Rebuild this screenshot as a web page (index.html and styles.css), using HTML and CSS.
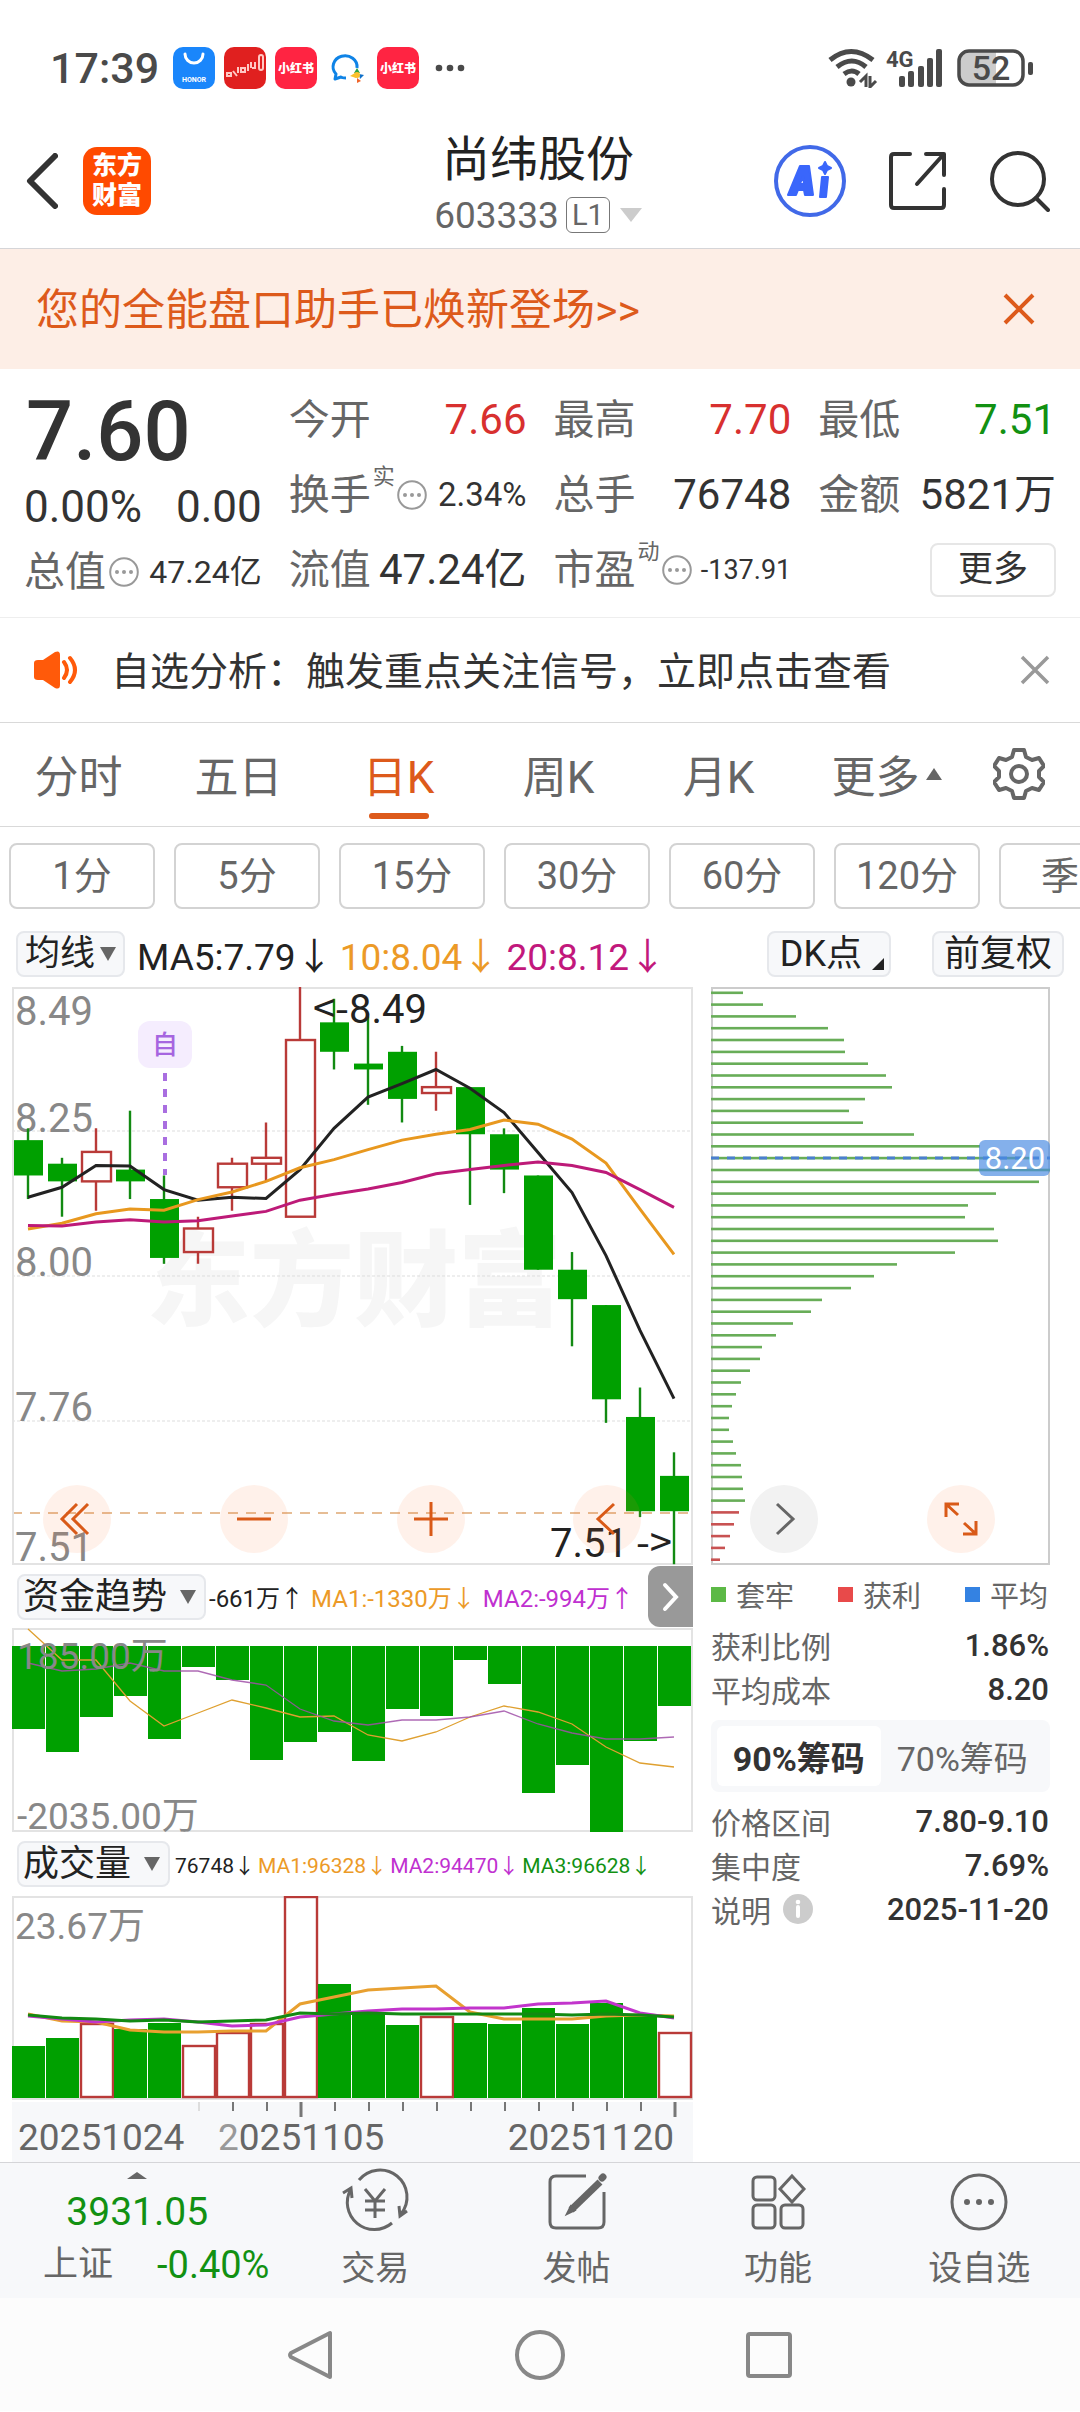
FILE: index.html
```html
<!DOCTYPE html>
<html lang="zh-CN">
<head>
<meta charset="utf-8">
<meta name="viewport" content="width=device-width, initial-scale=1">
<title>尚纬股份 603333</title>
<link rel="stylesheet" href="styles.css">
</head>
<body>
<div class="status">
  <span class="clock">17:39</span>
  <svg class="app" viewBox="0 0 42 42"><rect width="42" height="42" rx="10" fill="#1a86fb"/><path d="M12 7a9 9 0 0 0 18 0" fill="none" stroke="#fff" stroke-width="3" stroke-linecap="round"/><text x="21" y="35" font-size="7" font-weight="700" fill="#fff" text-anchor="middle">HONOR</text></svg>
  <svg class="app" viewBox="0 0 42 42"><rect width="42" height="42" rx="10" fill="#e0201f"/><g fill="none" stroke="#ffc9c4" stroke-width="2"><path d="M3 26h4v3H3zM9 24l4 5M14 20v6M17 21h4v4h-4zM24 17v7M27 15v6M31 15v6h-3"/><rect x="35" y="8" width="4" height="15" rx="2"/></g></svg>
  <svg class="app" viewBox="0 0 42 42"><rect width="42" height="42" rx="10" fill="#ff2442"/><text x="21" y="26" font-size="12" font-weight="900" fill="#fff" text-anchor="middle">小红书</text></svg>
  <svg class="app" viewBox="0 0 42 42"><path d="M20 31c-2 0-4 0-5-1l-6 2 1-5a12 11 0 1 1 21-6" fill="none" stroke="#0f83e6" stroke-width="3" stroke-linejoin="round"/><path d="M28 26l3-5 3 5z" fill="#2ba245"/><path d="M33 27l5 1-4 4z" fill="#0f70c9"/><path d="M31 31l4 3-4 2z" fill="#f0662b"/><path d="M24 29l5-3 1 5z" fill="#fbc02d"/><circle cx="31" cy="28" r="3" fill="#fbc02d"/></svg>
  <svg class="app" viewBox="0 0 42 42"><rect width="42" height="42" rx="10" fill="#ff2442"/><text x="21" y="26" font-size="12" font-weight="900" fill="#fff" text-anchor="middle">小红书</text></svg>
  <svg class="dots" viewBox="0 0 30 8" fill="#4a4a4a"><circle cx="4" cy="4" r="3.3"/><circle cx="15" cy="4" r="3.3"/><circle cx="26" cy="4" r="3.3"/></svg>
  <svg class="signals" viewBox="0 0 206 40">
    <g fill="none" stroke="#4a4a4a" stroke-width="5"><path d="M2 12q21-17 43 0"/><path d="M9 19q15-12 29 0"/><path d="M16 26q8-6 15 0"/></g>
    <circle cx="23" cy="34" r="4.500" fill="#4a4a4a"/>
    <path d="M38 39V28l-6 6M42 28v11l6-6" fill="none" stroke="#4a4a4a" stroke-width="3"/>
    <text class="net" x="58" y="19">4G</text>
    <g fill="#4a4a4a"><rect x="71" y="28" width="6" height="11" rx="2"/><rect x="80" y="23" width="6" height="16" rx="2"/><rect x="90" y="18" width="6" height="21" rx="2"/><rect x="99" y="10" width="6" height="29" rx="2"/><rect x="108" y="1" width="6" height="38" rx="2"/></g>
    <path d="M140 4h28v32h-28a8 8 0 0 1-8-8V12a8 8 0 0 1 8-8z" fill="#ccc"/>
    <rect x="131" y="3" width="64" height="34" rx="10" fill="none" stroke="#4a4a4a" stroke-width="3.500"/>
    <rect x="200" y="14" width="5" height="13" rx="2" fill="#4a4a4a"/>
    <text class="charge" x="163" y="32">52</text>
  </svg>
</div>

<header class="top">
  <div class="top-left">
    <button class="plain" aria-label="返回"><svg width="32" height="56" viewBox="0 0 32 56"><path d="M29 3L4 28l25 25" fill="none" stroke="#333" stroke-width="6" stroke-linejoin="round" stroke-linecap="round"/></svg></button>
    <a class="brand" href="#">东方<br>财富</a>
  </div>
  <div class="stock">
    <h1>尚纬股份</h1>
    <div class="code"><span>603333</span><span class="level">L1</span><i class="tri-down pale"></i></div>
  </div>
  <div class="top-right">
    <button class="plain" aria-label="AI"><svg width="72" height="72" viewBox="0 0 72 72"><circle cx="36" cy="36" r="34" fill="none" stroke="#4169e8" stroke-width="4"/><g fill="#3a66fb" stroke="#3a66fb" stroke-width="2" stroke-linejoin="round"><path fill-rule="evenodd" d="M14 50l12-29h9l4 29h-8l-1-5h-6l-2 5zM26 39h4l-1-8z"/><path d="M48 32h6l-2 20h-6z"/><path d="M51 17l2 4 4 2-4 2-2 4-2-4-4-2 4-2z"/></g></svg></button>
    <button class="plain" aria-label="分享"><svg width="58" height="60" viewBox="0 0 58 60"><g fill="none" stroke="#333" stroke-width="4" stroke-linecap="round" stroke-linejoin="round"><path d="M21 3H5q-3 0-3 3v48q0 3 3 3h47q3 0 3-3V38"/><path d="M37 3h18v21M54 4L28 33"/></g></svg></button>
    <button class="plain" aria-label="搜索"><svg width="60" height="62" viewBox="0 0 60 62"><g fill="none" stroke="#333" stroke-width="4" stroke-linecap="round"><circle cx="28" cy="29" r="26"/><path d="M46 48l12 12"/></g></svg></button>
  </div>
</header>

<div class="promo">
  <a href="#">您的全能盘口助手已焕新登场&gt;&gt;</a>
  <button class="plain" aria-label="关闭"><svg width="32" height="32" viewBox="0 0 32 32"><path d="M2 2l28 28M30 2L2 30" stroke="#dd5a1b" stroke-width="4"/></svg></button>
</div>

<section class="quote">
  <div class="price-col">
    <strong class="price">7.60</strong>
    <div class="cell big"><span>0.00%</span><span>0.00</span></div>
    <div class="cell"><span class="k">总值</span><svg class="more-dot" viewBox="0 0 30 30"><use href="#more"/></svg><span class="v mid">47.24亿</span></div>
  </div>
  <div class="cell"><span class="k">今开</span><span class="v red">7.66</span></div>
  <div class="cell"><span class="k">最高</span><span class="v red">7.70</span></div>
  <div class="cell"><span class="k">最低</span><span class="v green">7.51</span></div>
  <div class="cell"><span class="k">换手</span><sup>实</sup><svg class="more-dot" viewBox="0 0 30 30"><g id="more"><circle cx="15" cy="15" r="13.800" fill="none" stroke="#999" stroke-width="2"/><g fill="#999"><circle cx="8" cy="15" r="2"/><circle cx="15" cy="15" r="2"/><circle cx="22" cy="15" r="2"/></g></g></svg><span class="v mid">2.34%</span></div>
  <div class="cell"><span class="k">总手</span><span class="v">76748</span></div>
  <div class="cell"><span class="k">金额</span><span class="v">5821万</span></div>
  <div class="cell"><span class="k">流值</span><span class="v">47.24亿</span></div>
  <div class="cell"><span class="k">市盈</span><sup>动</sup><svg class="more-dot" viewBox="0 0 30 30"><use href="#more"/></svg><span class="v small">-137.91</span></div>
  <div class="cell"><button class="more">更多</button></div>
</section>

<div class="notice">
  <svg width="46" height="38" viewBox="0 0 46 38"><path d="M1 12q0-3 4-3h5L22 1q5-2 5 3v30q0 5-5 3l-12-8H5q-4 0-4-3z" fill="#ff5a0a"/><path d="M31 11q6 8 0 16M37 7q10 12 0 24" fill="none" stroke="#ff5a0a" stroke-width="4" stroke-linecap="round"/></svg>
  <a href="#">自选分析：触发重点关注信号，立即点击查看</a>
  <button class="plain" aria-label="关闭"><svg width="30" height="30" viewBox="0 0 30 30"><path d="M2 2l26 26M28 2L2 28" stroke="#999" stroke-width="3.500"/></svg></button>
</div>

<nav class="tabs">
  <button>分时</button><button>五日</button><button class="on">日K</button><button>周K</button><button>月K</button><button class="menu">更多<i class="tri-up"></i></button>
  <button aria-label="设置"><svg width="52" height="54" viewBox="0 0 52 54"><path d="M21 3h10l2 7 6 3 7-2 5 8-5 5v6l5 5-5 8-7-2-6 3-2 7H21l-2-7-6-3-7 2-5-8 5-5v-6l-5-5 5-8 7 2 6-3z" fill="none" stroke="#666" stroke-width="4" stroke-linejoin="round"/><circle cx="26" cy="27" r="8" fill="none" stroke="#666" stroke-width="4"/></svg></button>
</nav>

<div class="periods">
  <button>1分</button><button>5分</button><button>15分</button><button>30分</button><button>60分</button><button>120分</button><button>季K</button>
</div>

<div class="ma-bar">
  <label class="pick tight"><select aria-label="主图指标"><option>均线</option></select><i class="tri-down"></i></label>
  <span class="dark">MA5:7.79↓</span><span class="orange">10:8.04↓</span><span class="pink">20:8.12↓</span>
  <button class="pick dk">DK点<i class="corner"></i></button>
  <button class="pick">前复权</button>
</div>

<main class="charts">
  <section class="left">
    <svg id="kline" viewBox="0 0 681 578">
      <text class="watermark" x="134" y="331">东方财富</text>
      <g class="grid"><path d="M0 144h681M0 289h681M0 434h681"/></g>
      <path d="M0 526h681" stroke="#e6bd95" stroke-width="2" stroke-dasharray="10 8"/>
      <rect x="1" y="1" width="679" height="576" fill="none" stroke="#e3e3e3" stroke-width="2"/>
      <g class="axis"><text x="3" y="38">8.49</text><text x="3" y="145">8.25</text><text x="3" y="289">8.00</text><text x="3" y="434">7.76</text><text x="3" y="574">7.51</text></g>
      <g id="candles"></g>
      <rect x="126" y="34" width="54" height="47" rx="12" fill="#f5edfe"/>
      <text x="153" y="67" font-size="26" font-weight="500" fill="#a665e0" text-anchor="middle">自</text>
      <path d="M153 86v102" stroke="#a96ee0" stroke-width="4" stroke-dasharray="8 8"/>
      <g class="mark"><text class="arrow" x="337" y="36" text-anchor="end">&lt;-</text><text x="337" y="36">8.49</text><text x="538" y="570">7.51</text><text class="arrow" x="660" y="570" text-anchor="end">-&gt;</text></g>
    </svg>

    <div class="legend">
      <label class="pick"><select aria-label="副图指标一"><option>资金趋势</option></select><i class="tri-down"></i></label>
      <span class="dark">-661万↑</span><span class="orange">MA1:-1330万↓</span><span class="violet">MA2:-994万↑</span>
      <button class="next" aria-label="下一项"><svg width="18" height="30" viewBox="0 0 18 30"><path d="M3 3l11 12L3 27" fill="none" stroke="#fff" stroke-width="4" stroke-linecap="round"/></svg></button>
    </div>
    <svg id="fund" viewBox="0 0 681 204">
      <rect x="1" y="1" width="679" height="202" fill="none" stroke="#e3e3e3" stroke-width="2"/>
      <g id="fund-bars"></g>
      <g class="axis sub"><text x="5" y="41">185.00万</text><text x="5" y="201">-2035.00万</text></g>
    </svg>

    <div class="legend dense">
      <label class="pick"><select aria-label="副图指标二"><option>成交量</option></select><i class="tri-down"></i></label>
      <span class="dark">76748↓</span><span class="orange">MA1:96328↓</span><span class="violet">MA2:94470↓</span><span class="green">MA3:96628↓</span>
    </div>
    <svg id="volume" viewBox="0 0 681 204">
      <rect x="1" y="1" width="679" height="202" fill="none" stroke="#e3e3e3" stroke-width="2"/>
      <g class="axis sub"><text x="3" y="43">23.67万</text></g>
      <g id="volume-bars"></g>
    </svg>
    <svg class="dates" viewBox="0 0 681 60">
      <g id="ticks"></g>
      <text x="6" y="48">20251024</text><text x="206" y="48"><tspan fill="#999">2</tspan>0251105</text><text x="662" y="48" text-anchor="end">20251120</text>
    </svg>
  </section>

  <section class="right">
    <svg id="chips" viewBox="0 0 339 578">
      <rect x="1" y="1" width="337" height="576" fill="none" stroke="#ccc" stroke-width="2"/>
      <g id="chip-lines"></g>
      <path d="M0 171h339" stroke="#4a7fd0" stroke-width="3" stroke-dasharray="8 8"/>
      <rect x="268" y="153" width="71" height="36" rx="6" fill="#4a8ae2" fill-opacity=".68"/>
      <text x="304" y="182" font-size="31" fill="#fff" text-anchor="middle">8.20</text>
    </svg>
    <ul class="keys"><li class="k-green">套牢</li><li class="k-red">获利</li><li class="k-blue">平均</li></ul>
    <dl><dt>获利比例</dt><dd>1.86%</dd><dt>平均成本</dt><dd>8.20</dd></dl>
    <div class="segment"><button class="on">90%筹码</button><button>70%筹码</button></div>
    <dl><dt>价格区间</dt><dd>7.80-9.10</dd><dt>集中度</dt><dd>7.69%</dd><dt>说明<svg width="30" height="30" viewBox="0 0 30 30"><circle cx="15" cy="15" r="15" fill="#ccc"/><circle cx="15" cy="8" r="2.300" fill="#fff"/><path d="M15 13v9" stroke="#fff" stroke-width="4" stroke-linecap="round"/></svg></dt><dd>2025-11-20</dd></dl>
  </section>

  <div class="controls">
    <button aria-label="最早"><svg viewBox="0 0 40 40"><path d="M20 5L5 20l15 15M31 5L16 20l15 15"/></svg></button>
    <button aria-label="缩小"><svg viewBox="0 0 40 40"><path d="M3 20h34"/></svg></button>
    <button aria-label="放大"><svg viewBox="0 0 40 40"><path d="M3 20h34M20 3v34"/></svg></button>
    <button aria-label="向左"><svg viewBox="0 0 40 40"><path d="M27 5L11 20l16 15"/></svg></button>
    <button class="grey" aria-label="向右"><svg viewBox="0 0 40 40"><path d="M13 5l16 15-16 15"/></svg></button>
    <button aria-label="全屏"><svg viewBox="0 0 40 40"><path d="M5 18V5h13M5 5l12 11M35 22v13H22M35 35L23 24"/></svg></button>
  </div>
</main>

<footer class="dock">
  <a class="index" href="#"><i class="tri-up"></i><strong>3931.05</strong><span><em>上证</em>-0.40%</span></a>
  <a href="#"><svg viewBox="0 0 66 60"><path d="M17 8a27 27 0 0 1 42 34M50 51A27 27 0 0 1 9 17M1 21l8-5 1 10M57 34l1 10 7-5" /><path d="M23 17l10 12 10-12M33 29v17M23 29h20M23 38h20"/></svg>交易</a>
  <a href="#"><svg viewBox="0 0 66 60"><path d="M42 4H12q-6 0-6 6v40q0 6 6 6h42q6 0 6-6V20"/><path d="M56 10L27 38" stroke-width="7"/><path d="M59 5l-1 1" stroke-width="7" stroke-linecap="round"/><path d="M27 35l-3 6 6-3z"/></svg>发帖</a>
  <a href="#"><svg viewBox="0 0 66 60"><rect x="8" y="5" width="22" height="23" rx="4"/><path d="M47 4l12 13-12 13-12-13z"/><rect x="8" y="33" width="22" height="23" rx="4"/><rect x="36" y="33" width="22" height="23" rx="4"/></svg>功能</a>
  <a href="#"><svg viewBox="0 0 66 60"><circle cx="33" cy="30" r="27"/><g fill="#666" stroke="none"><circle cx="21" cy="30" r="3"/><circle cx="33" cy="30" r="3"/><circle cx="45" cy="30" r="3"/></g></svg>设自选</a>
</footer>
<nav class="system">
  <button class="plain" aria-label="后退"><svg viewBox="0 0 52 52"><path d="M45 4v44L6 28q-2-2 0-4z"/></svg></button>
  <button class="plain" aria-label="主页"><svg viewBox="0 0 52 52"><circle cx="26" cy="26" r="23"/></svg></button>
  <button class="plain" aria-label="最近任务"><svg viewBox="0 0 52 52"><rect x="5" y="5" width="42" height="42" rx="2"/></svg></button>
</nav>
<script src="charts.js"></script>
</body>
</html>
```
FILE: styles.css
```css
* { box-sizing: border-box; }
body { margin: 0; background: #fff; color: #333; font-family: Roboto, "Noto Sans CJK SC", sans-serif; overflow-x: hidden; }
button, select { font: inherit; color: inherit; background: none; border: 0; padding: 0; margin: 0; appearance: none; }
a { color: inherit; text-decoration: none; }
svg { display: block; flex: none; }
h1, dl, dd, ul { margin: 0; padding: 0; }
text { font-family: Roboto, "Noto Sans CJK SC", sans-serif; }
.plain { display: block; }

.red { color: #d8302f; }
.green { color: #129112; }
.orange { color: #ec9a27; }
.pink { color: #c2187c; }
.violet { color: #c030d0; }
.dark { color: #222; }

.tri-down, .tri-up { display: inline-block; border: 8px solid transparent; }
.tri-down { border-top: 14px solid #666; border-bottom: 0; }
.tri-up { border-bottom: 12px solid #666; border-top: 0; }
.tri-down.pale { border-width: 14px 11px 0; border-top-color: #ccc; }

.status { display: flex; align-items: center; height: 112px; padding: 24px 46px 0 50px; gap: 9px; }
.clock { font-size: 43px; font-weight: 500; color: #4a4a4a; margin-right: 5px; }
.app { width: 42px; height: 42px; }
.dots { width: 30px; height: 8px; margin-left: 7px; }
.signals { width: 206px; height: 40px; margin-left: auto; }
.net { font-size: 22px; font-weight: 700; fill: #4a4a4a; }
.charge { font-size: 34px; font-weight: 500; fill: #4a4a4a; text-anchor: middle; }

.top { display: grid; grid-template-columns: 1fr auto 1fr; align-items: center; height: 137px; padding: 2px 30px 0 26px; border-bottom: 1px solid #d5d5d8; }
.top-left { display: flex; align-items: center; gap: 25px; }
.brand { width: 68px; height: 68px; padding-top: 4px; border-radius: 14px; background: #ff4a00; color: #fff; font-size: 25px; line-height: 30px; font-weight: 900; text-align: center; }
.stock { text-align: center; }
h1 { padding-top: 4px; font-size: 48px; line-height: 64px; font-weight: 400; color: #222; }
.code { display: flex; align-items: center; justify-content: center; height: 46px; font-size: 37px; color: #666; gap: 7px; }
.level { height: 36px; padding: 0 5px; border: 1px solid #777; border-radius: 6px; font-size: 29px; line-height: 34px; }
.code .tri-down { margin-left: 3px; }
.top-right { display: flex; align-items: center; justify-content: flex-end; gap: 43px; }

.promo { display: flex; align-items: center; justify-content: space-between; height: 120px; padding: 0 45px 0 36px; background: #fdeee6; color: #dd5a1b; font-size: 43px; }
.promo a { padding-bottom: 6px; }

.quote { display: grid; grid-template-columns: repeat(4, minmax(0, 1fr)); grid-auto-rows: 75px; column-gap: 27px; padding: 13px 24px 10px; border-bottom: 1px solid #eee; }
.price-col { grid-row: span 3; display: grid; grid-template-rows: 95px 60px 70px; }
.price { padding-left: 2px; font-size: 83px; line-height: 100px; font-weight: 500; }
.cell { display: flex; align-items: center; font-size: 41px; line-height: 56px; white-space: nowrap; }
.cell.big { justify-content: space-between; font-size: 44px; }
.k { color: #666; }
.v { margin-left: auto; font-size: 42px; }
.v.mid { font-size: 33px; }
.price-col .v.mid { font-size: 32px; }
.v.small { font-size: 27px; }
sup { align-self: flex-start; margin: 6px 2px 0; font-size: 22px; line-height: 28px; color: #666; }
.more-dot { width: 30px; height: 30px; }
.price-col .more-dot { margin-left: 3px; }
.more { width: 126px; height: 54px; margin-left: auto; border: 2px solid #e6e6e6; border-radius: 8px; font-size: 35px; line-height: 46px; }

.notice { display: flex; align-items: center; height: 105px; padding: 0 30px 0 33px; border-bottom: 1px solid #d9d9d9; font-size: 39px; }
.notice a { margin: 0 auto 0 32px; padding-bottom: 4px; }

.tabs { display: grid; grid-template-columns: repeat(6, 4fr) 3fr; height: 104px; border-bottom: 1px solid #d9d9d9; color: #666; font-size: 44px; }
.tabs button { display: flex; align-items: center; justify-content: center; gap: 6px; padding: 0 3px 2px 0; }
.tabs .menu { padding-left: 16px; }
.tabs .on { position: relative; color: #dd5a1b; }
.tabs .on::after { content: ""; position: absolute; bottom: 7px; width: 60px; height: 6px; border-radius: 3px; background: #dd5a1b; }

.periods { display: flex; gap: 19px; padding: 16px 0 22px 9px; overflow: hidden; color: #666; }
.periods button { flex: 0 0 146px; height: 66px; border: 2px solid #d3d3d3; border-radius: 8px; font-size: 38px; line-height: 60px; }

.pick { display: flex; align-items: center; gap: 12px; height: 46px; padding: 0 8px 0 4px; border: 2px solid #e6e8ec; border-radius: 8px; background: #f7f8fa; color: #222; font-size: 36px; line-height: 42px; }
.pick select { height: 42px; line-height: 42px; }
.ma-bar { display: flex; align-items: center; height: 56px; padding: 0 16px 10px; gap: 7px; font-size: 37px; white-space: nowrap; }
.ma-bar .pick { padding: 0 10px; }
.ma-bar .pick.tight { gap: 4px; margin-right: 5px; padding: 0 7px; font-size: 35px; }
.ma-bar .dk { margin: 0 34px 0 auto; padding: 0 5px 0 11px; gap: 10px; }
.corner { align-self: flex-end; margin-bottom: 5px; border-left: 12px solid transparent; border-bottom: 12px solid #222; }

.charts { position: relative; display: grid; grid-template-columns: minmax(0, 681fr) minmax(0, 339fr); column-gap: 18px; padding: 0 30px 0 12px; }
.left svg[id], .right svg[id] { width: 100%; }
.axis text { font-size: 40px; fill: #888; }
.axis.sub text { font-size: 37px; }
.mark text { font-size: 40px; fill: #222; }
.mark .arrow { font-family: "Noto Sans CJK SC", sans-serif; }
.watermark { font-size: 104px; font-weight: 900; fill: #f6f6f6; }
.grid { stroke: #ddd; stroke-width: 1; stroke-dasharray: 3 2; }
.legend { display: flex; align-items: center; height: 63px; padding-left: 5px; gap: 7px; font-size: 24px; white-space: nowrap; }
.legend .pick { margin-right: -4px; }
.legend.dense { height: 64px; gap: 3px; font-size: 21px; }
.legend.dense .pick { margin-right: 2px; }
.next { display: flex; align-items: center; justify-content: center; width: 45px; height: 61px; margin-left: auto; border-radius: 12px 0 0 12px; background: #999; }
.dates { width: 100%; margin-top: 2px; background: #f7f8fa; }
.dates text { font-size: 37px; fill: #666; }

.keys { display: flex; justify-content: space-between; height: 58px; padding: 0 2px 0 0; list-style: none; align-items: center; font-size: 29px; color: #666; }
.keys li { display: flex; align-items: center; gap: 10px; }
.keys li::before { content: ""; width: 15px; height: 15px; background: #5cb946; }
.keys .k-red::before { background: #e84a4a; }
.keys .k-blue::before { background: #3482e2; }
dl { display: grid; grid-template-columns: auto auto; grid-auto-rows: 44px; align-items: center; padding-right: 1px; }
dt { display: flex; align-items: center; gap: 12px; font-size: 30px; color: #666; }
dd { text-align: right; font-size: 31px; font-weight: 500; }
.segment { display: grid; grid-template-columns: 1fr 1fr; height: 72px; margin: 9px 0 7px; padding: 6px; border-radius: 8px; background: #f7f8fa; color: #666; font-size: 34px; }
.segment .on { border-radius: 6px; background: #fff; color: #333; font-weight: 700; }

.controls { position: absolute; top: 498px; left: 43px; right: 85px; display: flex; justify-content: space-between; }
.controls button { display: flex; align-items: center; justify-content: center; width: 68px; height: 68px; border-radius: 50%; background: rgba(255, 115, 50, .1); }
.controls svg { width: 40px; height: 40px; fill: none; stroke: #d95a18; stroke-width: 3; }
.controls .grey { background: #f2f2f2; }
.controls .grey svg { stroke: #666; }

.dock { display: grid; grid-template-columns: 274fr repeat(4, 201fr); height: 136px; border-top: 1px solid #d5d5d8; background: #f7f8fa; color: #666; font-size: 34px; }
.dock a { display: flex; flex-direction: column; align-items: center; line-height: 50px; padding-top: 9px; }
.dock svg { width: 66px; height: 60px; margin-bottom: 11px; fill: none; stroke: #666; stroke-width: 3; overflow: visible; }
.dock .index { padding-top: 9px; color: #129112; }
.dock .tri-up { border-width: 0 10px 7px; }
.index strong { font-size: 39px; font-weight: 400; line-height: 66px; }
.index span { display: flex; gap: 44px; margin-left: 38px; font-size: 38px; line-height: 40px; }
.index em { font-style: normal; font-size: 35px; color: #666; }
.system { display: flex; justify-content: center; align-items: center; gap: 177px; height: 113px; background: #fcfcfc; }
.system svg { width: 52px; height: 52px; fill: none; stroke: #888; stroke-width: 4; stroke-linejoin: round; }
```
FILE: charts.js
```js
const GREEN = '#00a000', RED = '#b93a38', STEP = 34;
const put = (id, html) => { document.getElementById(id).innerHTML = html; };
const midX = i => i * STEP + 16;
const line = (ys, color, width, opacity = 1) =>
  `<polyline points="${ys.map((y, i) => midX(i) + ',' + y.toFixed(1)).join(' ')}" fill="none" stroke="${color}" stroke-width="${width}" stroke-opacity="${opacity}"/>`;

// open, close, high, low
const days = [
  [8.23, 8.17, 8.25, 8.13], [8.19, 8.16, 8.20, 8.10], [8.16, 8.21, 8.25, 8.11], [8.18, 8.16, 8.28, 8.13],
  [8.13, 8.03, 8.17, 8.02], [8.04, 8.08, 8.10, 8.02], [8.15, 8.19, 8.20, 8.11], [8.19, 8.20, 8.26, 8.16],
  [8.10, 8.40, 8.49, 8.10], [8.43, 8.38, 8.47, 8.35], [8.36, 8.35, 8.44, 8.29], [8.38, 8.30, 8.39, 8.26],
  [8.31, 8.32, 8.38, 8.28], [8.32, 8.24, 8.32, 8.12], [8.24, 8.18, 8.25, 8.14], [8.17, 8.01, 8.17, 8.01],
  [8.01, 7.96, 8.04, 7.88], [7.95, 7.79, 7.95, 7.75], [7.76, 7.60, 7.81, 7.59], [7.66, 7.60, 7.70, 7.51]
];
const ma5 = [8.133, 8.150, 8.187, 8.186, 8.146, 8.128, 8.133, 8.131, 8.180, 8.250, 8.303, 8.326, 8.350, 8.318, 8.277, 8.209, 8.141, 8.034, 7.907, 7.791];
const ma10 = [8.079, 8.089, 8.105, 8.113, 8.111, 8.129, 8.142, 8.160, 8.183, 8.197, 8.214, 8.230, 8.240, 8.248, 8.264, 8.257, 8.232, 8.191, 8.113, 8.036];
const ma20 = [8.085, 8.084, 8.091, 8.095, 8.091, 8.093, 8.101, 8.109, 8.128, 8.138, 8.147, 8.158, 8.173, 8.180, 8.187, 8.193, 8.187, 8.175, 8.146, 8.116];
const priceY = p => (8.49 - p) * 589;

put('candles', days.map(([open, close, high, low], i) => {
  const x = midX(i), top = priceY(Math.max(open, close)), bottom = priceY(Math.min(open, close));
  if (close > open) {
    return `<path d="M${x} ${priceY(high)}V${top}M${x} ${bottom}V${priceY(low)}" stroke="${RED}" stroke-width="2.4"/>` +
      `<rect x="${x - 14}" y="${top}" width="29" height="${bottom - top}" fill="none" stroke="${RED}" stroke-width="2.4"/>`;
  }
  return `<path d="M${x} ${priceY(high)}V${priceY(low)}" stroke="#128a12" stroke-width="2.4"/>` +
    `<rect x="${x - 14}" y="${top}" width="29" height="${bottom - top}" fill="${GREEN}"/>`;
}).join('') + line(ma5.map(priceY), '#222', 3) + line(ma10.map(priceY), '#e8981f', 3) + line(ma20.map(priceY), '#bd1a78', 3));

const flow = [83, 106, 71, 50, 93, 21, 34, 114, 96, 86, 115, 63, 70, 14, 38, 147, 119, 186, 95, 60];
const flowShort = [1, 32, 32, 73, 98, 85, 72, 80, 89, 88, 107, 113, 104, 89, 78, 84, 96, 119, 135, 139];
const flowLong = [35, 43, 41, 35, 43, 43, 52, 57, 81, 93, 97, 92, 92, 89, 83, 96, 105, 111, 111, 109];
put('fund-bars', flow.map((h, i) => `<rect x="${i * STEP}" y="18" width="33" height="${h}" fill="${GREEN}"/>`).join('') +
  line(flowShort, '#dfa030', 1.3) + line(flowLong, '#a050a8', 1.3, 0.85));

// height of the bar, rising day
const volume = [[52], [60], [74, 1], [69], [75], [52, 1], [65, 1], [74, 1], [201, 1], [114], [86], [73], [81, 1], [75], [74], [90], [74], [95], [83], [65, 1]];
const vol5 = [46, 53, 54, 62, 64, 64, 63, 63, 36, 29, 22, 20, 18, 44, 51, 51, 51, 48, 47, 48].map(v => v + 72);
const vol10 = [48, 51, 54, 52, 51, 54, 58, 57, 49, 46, 43, 41, 41, 40, 40, 36, 35, 33, 45, 50].map(v => v + 72);
const vol20 = [47, 50, 51, 53, 52, 54, 53, 52, 45, 46, 45, 46, 46, 46, 46, 46, 47, 46, 47, 49].map(v => v + 72);
put('volume-bars', volume.map(([h, up], i) => up
  ? `<rect x="${i * STEP + 1}" y="${202 - h}" width="32" height="${h - 1}" fill="#fff" stroke="${RED}" stroke-width="2.4"/>`
  : `<rect x="${i * STEP}" y="${202 - h}" width="33" height="${h}" fill="${GREEN}"/>`).join('') +
  line(vol5, '#e8a030', 3) + line(vol10, '#c235cc', 3) + line(vol20, '#128a12', 3));

put('ticks', days.map((_, i) => {
  if (i < 5) return '';
  const major = i === 8 || i === 19;
  return `<path d="M${midX(i) + 1} 0v${major ? 15 : 9}" stroke="${i === 5 ? '#ddd' : '#777'}" stroke-width="${major ? 3 : 2}"/>`;
}).join(''));

const trapped = [32, 52, 85, 117, 133, 134, 157, 175, 181, 154, 138, 152, 203, 269, 322, 339, 328, 285, 257, 254, 283, 287, 244, 186, 163, 140, 111, 100, 82, 65, 51, 49, 39, 30, 25, 21, 18, 18, 22, 25, 30, 31, 32, 34];
const winning = [28, 23, 19, 14, 9];
put('chip-lines', trapped.concat(winning).map((w, i) =>
  `<rect y="${(4.5 + i * 11.81).toFixed(1)}" width="${w}" height="2.6" fill="${i < trapped.length ? '#68ad58' : '#c85252'}"/>`).join(''));
```
